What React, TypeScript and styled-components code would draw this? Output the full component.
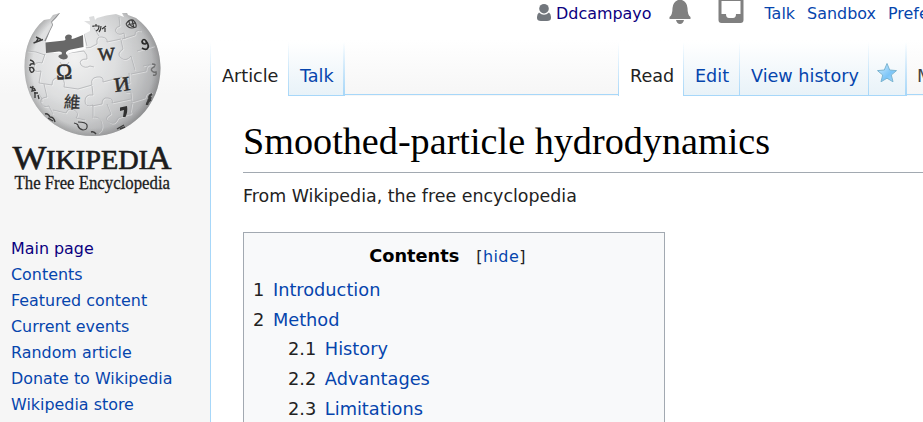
import React from 'react';
import styled, { createGlobalStyle, css } from 'styled-components';

const GlobalStyle = createGlobalStyle`
  * { box-sizing: border-box; }
  html, body { margin: 0; overflow: hidden; }
  body {
    font-family: "DejaVu Sans", sans-serif;
    color: #222;
    background: #f6f6f6;
  }
`;

const Page = styled.div`
  display: grid;
  grid-template-columns: 210px 713px;
  width: 923px;
  height: 422px;
  overflow: hidden;
  background: #f6f6f6 linear-gradient(#fff 40px, #f6f6f6 95px) no-repeat;
`;

const Link = styled.a<{ $visited?: boolean }>`
  color: ${p => (p.$visited ? '#0b0080' : '#0645ad')};
  text-decoration: none;
`;

const Sidebar = styled.aside`
  display: flex;
  flex-direction: column;
`;

const Logo = styled.svg`
  display: block;
  width: 210px;
  height: 200px;
`;

const Navigation = styled.nav`
  display: flex;
  flex-direction: column;
  padding: 36px 0 0 11px;
  font-size: 15.92px;
  line-height: 26px;
  white-space: nowrap;
`;

const Main = styled.main`
  display: flex;
  flex-direction: column;
  min-width: 0;
  height: 422px;
`;

const PersonalBar = styled.div`
  display: flex;
  align-items: flex-start;
  height: 42px;
  padding-left: 326px;
  font-size: 15.95px;
  line-height: 27px;
  white-space: nowrap;
  overflow: hidden;
  flex: none;
`;

const UserIcon = styled.svg`
  width: 16px;
  height: 24px;
  margin-right: 4px;
  flex: none;
`;

const NoticeIcon = styled.svg<{ $left: number; $right: number }>`
  width: 26px;
  height: 26px;
  margin: 0 ${p => p.$right}px 0 ${p => p.$left}px;
  flex: none;
`;

const PersonalLinks = styled.div`
  display: flex;
  gap: 12px;
`;

const fade = 'linear-gradient(rgba(167,215,249,0), #a7d7f9)';

const TabRow = styled.div`
  display: flex;
  height: 54px;
  margin-bottom: -1px;
  font-size: 17.6px;
  line-height: 68px;
  white-space: nowrap;
  flex: none;
`;

const Tab = styled.div<{ $width: number; $active?: boolean; $last?: boolean }>`
  width: ${p => p.$width}px;
  padding-left: 12px;
  flex: none;
  ${p =>
    p.$active
      ? css`
          background: ${fade} 0 0 / 1px 100% no-repeat, #fff;
        `
      : css`
          background: linear-gradient(#a7d7f9, #a7d7f9) 0 100% / 100% 1px no-repeat,
            ${fade} 0 0 / 1px 100% no-repeat,
            ${fade} 100% 0 / ${p.$last ? 2 : 0}px 100% no-repeat,
            linear-gradient(#fff, #e8f2f8);
        `}
`;

const TabSpace = styled.div<{ $width: number }>`
  width: ${p => p.$width}px;
  height: 53px;
  padding-left: 10px;
  border-bottom: 1px solid #a7d7f9;
  color: #444;
  flex: none;
`;

const Star = styled.svg`
  display: block;
  width: 22px;
  height: 22px;
  margin: 20px 0 0 -4px;
`;

const Content = styled.article`
  flex: 1;
  padding: 25px 0 0 32px;
  border-left: 1px solid #a7d7f9;
  background: #fff;
  clip-path: inset(1px 0 0 0);
`;

const Title = styled.h1`
  height: 53px;
  margin: 0;
  border-bottom: 1px solid #a2a9b1;
  color: #000;
  font: 400 38.2px/42px "Liberation Serif", serif;
  white-space: nowrap;
`;

const Tagline = styled.p`
  height: 59px;
  margin: 0;
  font-size: 17.43px;
  line-height: 46px;
`;

const Toc = styled.section`
  width: 422px;
  height: 240px;
  padding: 8px 9px;
  border: 1px solid #a2a9b1;
  background: #f8f9fa;
  font-size: 17.75px;
`;

const TocHead = styled.div`
  display: flex;
  justify-content: center;
  align-items: baseline;
  gap: 17px;
  height: 35px;
  padding-right: 13px;
  line-height: 30px;
`;

const TocTitle = styled.h2`
  margin: 0;
  color: #000;
  font-size: 17.75px;
`;

const Toggle = styled.span`
  font-size: 16px;
  letter-spacing: .4px;
`;

const TocEntry = styled.div<{ $nested?: boolean }>`
  display: flex;
  gap: 8.600px;
  height: 29.700px;
  padding-left: ${p => (p.$nested ? 35 : 0)}px;
  line-height: 29.700px;
`;

const seams = [
  'M27 51 q9 0 18 4 M45 54 l-3 9 q-7-2-8 4 t7 4 l-2 12 M39 83 l13 2 q0-8 7-7 t5 9 l14 2',
  'M60 62 q4 9 9 0 M69 53 l15-2 q4 4 3 8 q-9 0-6 6 q4 4 9 1 l4 1 M84 48 q6 1 13-4 q-1-8 5-7 t5 5 l14-3 M84 34 l3 12',
  'M78 89 l14-4 q-2-7 5-8 t6 5 l19-5 M121 40 l2 9 q-7 5-2 9 t10-2 l4 14 M131 74 l15-3 q0-7 6-6',
  'M129 73 l1 10 q-9 1-7 6 t8 3 l1 10 M132 102 l13-4 q1-7 7-5 M92 86 l1 9 q-8-1-8 6 t8 4 l0 13',
  'M44 84 l3 13 q-8 1-6 6 t8 3 l4 8 M53 110 l13 3 q2-6 8-3 t2 8 l9 2 M39 94 q4 4 3 8',
  'M92 106 l10-2 q0-7 6-6 t4 5 l19-4 M94 117 q7 0 8 7 t-4 9 M107 104 l4 10 q-8 4-2 8 t9-4 l14-5 M132 103 l-2 12',
  'M94 28 l5 8 M119 17 l1 9 q-6 2-4 6 t8 1 l1 6 M122 39 l13-4 q0-6 6-4 M137 51 l17-5 M143 66 q7-2 12-1',
];

function WikipediaLogo() {
  return (
    <Logo viewBox="0 0 210 200" role="img" aria-label="Wikipedia, The Free Encyclopedia">
      <defs>
        <radialGradient id="sphere" gradientUnits="userSpaceOnUse" cx="74" cy="58" r="92">
          <stop offset="0" stopColor="#f1f1f1" />
          <stop offset=".45" stopColor="#dedfe0" />
          <stop offset=".7" stopColor="#c8c9ca" />
          <stop offset=".9" stopColor="#aeafb1" />
          <stop offset="1" stopColor="#939496" />
        </radialGradient>
        <radialGradient id="rim" gradientUnits="userSpaceOnUse" cx="92.500" cy="68" r="68.500">
          <stop offset=".88" stopColor="#777" stopOpacity="0" />
          <stop offset="1" stopColor="#777" stopOpacity=".4" />
        </radialGradient>
        <clipPath id="globe">
          <path d="M60 13 L53 15 L50 19 L44 20 C31 31 24.500 47 24.500 67 C24.500 106 55 136 92.500 136 C130 136 160.500 106 160.500 68 C160.500 47 151 29 136 18 L128 15 L127 13 L122 13 L124 17 L116 14 Q106 15 97 18 L95 20 L94 16 L89 17 L90 21 L84 21 L90 25 L90 31 L84 34 L86 49 L66 54 L46 52 L46 41 L50 31 L53 25 L52 22 L56 18 Z" />
        </clipPath>
      </defs>
      <g clipPath="url(#globe)">
        <rect x="20" y="8" width="145" height="132" fill="url(#sphere)" />
        <rect x="20" y="8" width="145" height="132" fill="url(#rim)" />
        <g fill="none" stroke="#fff" strokeWidth=".9" opacity=".45" transform="translate(.8 .8)">
          {seams.map(d => <path key={d} d={d} />)}
        </g>
        <g fill="none" stroke="#aeafb2" strokeWidth=".75">
          {seams.map(d => <path key={d} d={d} />)}
        </g>
        <path d="M45 41 L50 31 L53 25 L52 22 L60 13" fill="none" stroke="#929395" strokeWidth="1.600" />
        <g fill="none" stroke="#3c3c3c" strokeWidth="1.400">
          <path d="M33.500 43 L43 39.500 M36 37 L41 39.500 M36 42 L38 39" />
          <path d="M30 60 q4 1 4 4 q-4-1-4 2 M29 68 q4-2 5 2 q-1 3-3 2 q-2-2-1-4" />
          <path d="M30 87 l5 2 M33 86 l-1 5 l4-1 M34 93 l4 0 M35 92 v6 M38 95 l1 4" />
          <path d="M45 114 q3-1 5 3 q4 0 5 5 M48 118 l5 3" />
          <path d="M74 123 q5 1 4 4 M78 122 q8 0 9 3 q1 5-4 5 q-4-1-5-4" strokeWidth="1.200" />
          <path d="M91 132 q3-1 5 2 M117 129 l7-4 M120 129 l5-2" />
          <path d="M126 24 q3-5 7-4 q4 4 3 7 q-7 3-10-3 M129 21 q0 5 5 6 M132 20 l2 8 M128 25 l7-2" strokeWidth="1.100" />
          <path d="M152 64 q5 0 2 3 q-4 2-2 4 t4 1 q1 4-3 3" opacity=".55" />
          <path d="M152 94 q-4 2-2 6 q-3 2-3 5 M151 97 l-3 4" strokeWidth="2.400" />
        </g>
        <path d="M142 41 q2-3 4 0 q1 3-1 3 q-3 0-3-3 M146 41 q4 5 1 8 q-2 1-5-1" fill="none" stroke="#292929" strokeWidth="1.700" />
        <path d="M93 27 v-1 h6 q0 4-3 5 M96 24 v2 M101 26 q0 4-2 6 M106 26 l-4 3 M105 28 v4" fill="none" stroke="#383838" strokeWidth="1.200" />
      </g>
      <path d="M45.500 42.500 L62 40.700 Q67 40.500 65 38 Q65 34.500 69 34.500 Q73 35 71.500 38 Q71 39.500 74 38.500 L83 35 L83.500 47 L71 49.500 Q65 51 66 54 Q69 56 67 58.500 Q62 61 58.500 57 Q58 54.500 61.500 54.500 Q63 51.500 59 51.500 L46 53 Z" fill="#686868" />
      <g fill="#303030" fontFamily="Liberation Serif, serif">
        <text x="56" y="79" fontSize="22" transform="rotate(-3 64 72)" textLength="16" lengthAdjust="spacingAndGlyphs" stroke="#303030" strokeWidth=".6">Ω</text>
        <text x="98" y="60" fontSize="18" transform="rotate(-3 106 54)" textLength="17" lengthAdjust="spacingAndGlyphs" stroke="#303030" strokeWidth=".6">W</text>
        <text x="114" y="91" fontSize="20" transform="rotate(-8 121 85)" textLength="16" lengthAdjust="spacingAndGlyphs" stroke="#303030" strokeWidth=".5">И</text>
        <text x="64" y="108" fontSize="16.500" fontFamily="Noto Sans CJK SC, sans-serif" transform="rotate(4 72 102)" stroke="#303030" strokeWidth=".3">維</text>
        <path d="M120 107.500 l7-1.500 q1 6-1.500 11 h-2.500 l1-7-4 1z" />
      </g>
      <g fill="#1c1c1c" fontFamily="Liberation Serif, serif" stroke="#1c1c1c">
        <text x="12.500" y="168.500" fontSize="34" textLength="34" lengthAdjust="spacingAndGlyphs" strokeWidth=".6">W</text>
        <text x="46" y="168.500" fontSize="26.500" textLength="102" lengthAdjust="spacingAndGlyphs" strokeWidth=".6">IKIPEDI</text>
        <text x="147" y="168.500" fontSize="34" textLength="24.500" lengthAdjust="spacingAndGlyphs" strokeWidth=".6">A</text>
        <text x="14.500" y="188.500" fontSize="18.500" textLength="155.500" lengthAdjust="spacingAndGlyphs" strokeWidth=".3">The Free Encyclopedia</text>
      </g>
    </Logo>
  );
}

const navigation = ['Main page', 'Contents', 'Featured content', 'Current events', 'Random article', 'Donate to Wikipedia', 'Wikipedia store'];

const toc = [
  ['1', 'Introduction'],
  ['2', 'Method'],
  ['2.1', 'History'],
  ['2.2', 'Advantages'],
  ['2.3', 'Limitations'],
];

export default function App() {
  return (
    <>
      <GlobalStyle />
      <Page>
        <Sidebar>
          <WikipediaLogo />
          <Navigation>
            {navigation.map((item, i) => <Link key={item} $visited={i === 0}>{item}</Link>)}
          </Navigation>
        </Sidebar>
        <Main>
          <PersonalBar>
            <UserIcon viewBox="0 0 16 24" fill="#72777d">
              <circle cx="8" cy="8.700" r="4.800" />
              <path d="M3 12.500 Q8 17 13 12.500 Q15 14 15 17 V18 Q15 21 11 21 H5 Q1 21 1 18 V17 Q1 14 3 12.500 Z" />
            </UserIcon>
            <Link $visited>Ddcampayo</Link>
            <NoticeIcon viewBox="0 0 26 26" fill="#808080" $left={15} $right={25}>
              <path d="M11 0 H15 Q20 2 20.500 8 Q20.500 15 23.500 17 V19 H2.500 V17 Q5.500 15 5.500 8 Q6 2 11 0 Z M9 20 H17 Q16 24 13 24 Q10 24 9 20 Z" />
            </NoticeIcon>
            <NoticeIcon viewBox="0 0 26 26" fill="#808080" $left={0} $right={21}>
              <path fillRule="evenodd" d="M.500 0 H25.500 V20 Q25.500 23 22.500 23 H3.500 Q.500 23 .500 20 Z M3.500 1 V14 H8 Q8 18 11 18 H15 Q18 18 18 14 H22.500 V1 Z" />
            </NoticeIcon>
            <PersonalLinks>
              <Link>Talk</Link>
              <Link>Sandbox</Link>
              <Link>Preferences</Link>
            </PersonalLinks>
          </PersonalBar>
          <TabRow>
            <Tab $active $width={78}>Article</Tab>
            <Tab $last $width={57}><Link>Talk</Link></Tab>
            <TabSpace $width={273} />
            <Tab $active $width={65}>Read</Tab>
            <Tab $width={56}><Link>Edit</Link></Tab>
            <Tab $width={129}><Link>View history</Link></Tab>
            <Tab $last $width={39}>
              <Star viewBox="0 0 22 22">
                <defs>
                  <linearGradient id="star" x2="1" y2="1">
                    <stop stopColor="#d5efff" />
                    <stop offset=".6" stopColor="#7cc5f8" />
                    <stop offset="1" stopColor="#a9ddff" />
                  </linearGradient>
                </defs>
                <path d="M11 1.500 L13.700 8 L20.500 8.600 L15.300 13 L17 19.800 L11 16.200 L5 19.800 L6.700 13 L1.500 8.600 L8.300 8 Z" fill="url(#star)" stroke="#7cb5d1" />
              </Star>
            </Tab>
            <TabSpace $width={40}>More</TabSpace>
          </TabRow>
          <Content>
            <Title>Smoothed-particle hydrodynamics</Title>
            <Tagline>From Wikipedia, the free encyclopedia</Tagline>
            <Toc>
              <TocHead>
                <TocTitle>Contents</TocTitle>
                <Toggle>[<Link>hide</Link>]</Toggle>
              </TocHead>
              {toc.map(([number, title]) => (
                <TocEntry key={number} $nested={number.includes('.')}>
                  <span>{number}</span>
                  <Link>{title}</Link>
                </TocEntry>
              ))}
            </Toc>
          </Content>
        </Main>
      </Page>
    </>
  );
}
